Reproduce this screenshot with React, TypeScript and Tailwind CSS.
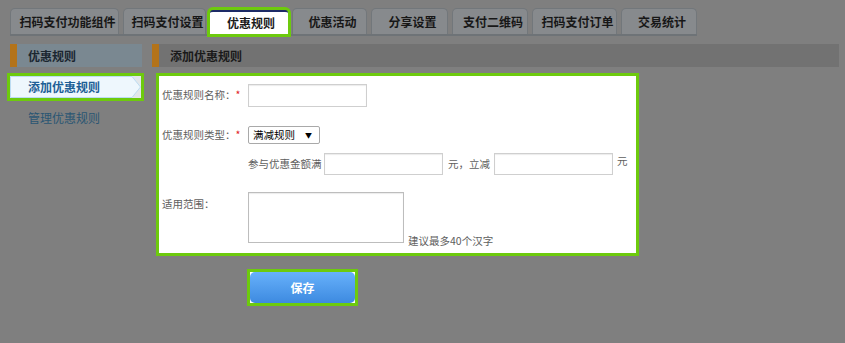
export default function App() {
  const tabs = [
    { label: "扫码支付功能组件", w: "w-[109px]" },
    { label: "扫码支付设置", w: "w-[83px]" },
    { label: "优惠规则", w: "w-[78px]", active: true },
    { label: "优惠活动", w: "w-[75px]" },
    { label: "分享设置", w: "w-[77px]" },
    { label: "支付二维码", w: "w-[76px]" },
    { label: "扫码支付订单", w: "w-[85px]" },
    { label: "交易统计", w: "w-[76px]" },
  ];

  return (
    <div className="w-[845px] h-[343px] overflow-hidden bg-[#7f7f7f] font-['Noto_Sans_CJK_SC',sans-serif] text-[12px]">
      {/* tabs */}
      <div className="ml-[10px] mt-[8px] inline-flex items-end gap-[4px] border-b-2 border-[#6e7377]">
        {tabs.map((t) =>
          t.active ? (
            <div
              key={t.label}
              className={`${t.w} h-[24px] flex items-center justify-center pl-[4px] bg-white border-t-2 border-[#1c2a66] rounded-t-[3px] ring-3 ring-[#6dca0d] font-bold text-[#1a1a1a] relative z-10`}
            >
              {t.label}
            </div>
          ) : (
            <div
              key={t.label}
              className={`${t.w} h-[26px] flex items-center justify-center pl-[6px] bg-[#878a8d] border border-b-0 border-[#72777b] rounded-t-[5px] font-bold text-[#171717]`}
            >
              {t.label}
            </div>
          )
        )}
      </div>

      <div className="flex mt-[8px] ml-[10px]">
        {/* sidebar */}
        <aside className="w-[132px] flex flex-col">
          <div className="h-[23px] flex items-center bg-[#7a8891] border-l-[7px] border-[#b3731a] pl-[11px] font-bold text-[#1b2630]">
            优惠规则
          </div>
          <div className="relative mt-[9px] w-[131px] h-[22px] ring-3 ring-[#6dca0d] bg-[#e3e7ea] flex items-center pl-[18px] font-bold text-[#1d5f96]">
            <svg className="absolute inset-0" width="131" height="22" viewBox="0 0 131 22">
              <polygon
                points="0.5,0.5 122,0.5 130.5,11 122,21.5 0.5,21.5"
                fill="#eef7fd"
                stroke="#bcdcf2"
              />
            </svg>
            <span className="relative">添加优惠规则</span>
          </div>
          <div className="mt-[9px] h-[22px] flex items-center pl-[18px] text-[#2a5673]">
            管理优惠规则
          </div>
        </aside>

        {/* main */}
        <main className="ml-[10px] w-[687px] flex flex-col">
          <div className="h-[23px] flex items-center bg-[#727272] border-l-[7px] border-[#b3731a] pl-[11px] font-bold text-[#1a1a1a]">
            添加优惠规则
          </div>

          <div className="ml-[4px] mt-[6px] w-[483px] border-[3px] border-[#6dca0d] bg-white pl-[3px] pt-[8px] pb-[10px] text-[10.5px] text-[#5e5e5e] leading-none">
            <div className="flex items-center">
              <div className="w-[86px]">
                优惠规则名称：<span className="text-[#e02424]">*</span>
              </div>
              <div className="w-[119px] h-[23px] border border-[#cfcfcf] shadow-[inset_0_1px_1px_rgba(0,0,0,0.08)]" />
            </div>

            <div className="flex items-center mt-[19px]">
              <div className="w-[86px]">
                优惠规则类型：<span className="text-[#e02424]">*</span>
              </div>
              <div className="w-[72px] h-[18px] border border-[#a9a9a9] rounded-[2px] flex items-center justify-between pl-[4px] pr-[7px] text-black text-[10.5px]">
                <span>满减规则</span>
                <span className="text-[7px]">▼</span>
              </div>
            </div>

            <div className="flex items-center mt-[9px] ml-[86px]">
              <span className="w-[76px]">参与优惠金额满</span>
              <div className="w-[119px] h-[22px] border border-[#cfcfcf] shadow-[inset_0_1px_1px_rgba(0,0,0,0.08)]" />
              <span className="ml-[5px] w-[46px]">元，立减</span>
              <div className="w-[119px] h-[22px] border border-[#cfcfcf] shadow-[inset_0_1px_1px_rgba(0,0,0,0.08)]" />
              <span className="ml-[4px] self-start mt-[3px]">元</span>
            </div>

            <div className="flex items-start mt-[17px]">
              <div className="w-[86px] mt-[7px]">适用范围：</div>
              <div className="w-[156px] h-[51px] border border-[#bdbdbd] shadow-[inset_0_1px_1px_rgba(0,0,0,0.08)]" />
              <span className="self-end ml-[4px] mb-[-3px]">建议最多40个汉字</span>
            </div>
          </div>

          <div className="ml-[95px] mt-[13px] w-[111px] h-[37px] border-[3px] border-[#6dca0d] bg-white">
            <div className="w-full h-full rounded-[5px] bg-gradient-to-b from-[#67b1fb] to-[#3d8ae0] flex items-center justify-center text-white font-bold text-[12px]">
              保存
            </div>
          </div>
        </main>
      </div>
    </div>
  );
}
